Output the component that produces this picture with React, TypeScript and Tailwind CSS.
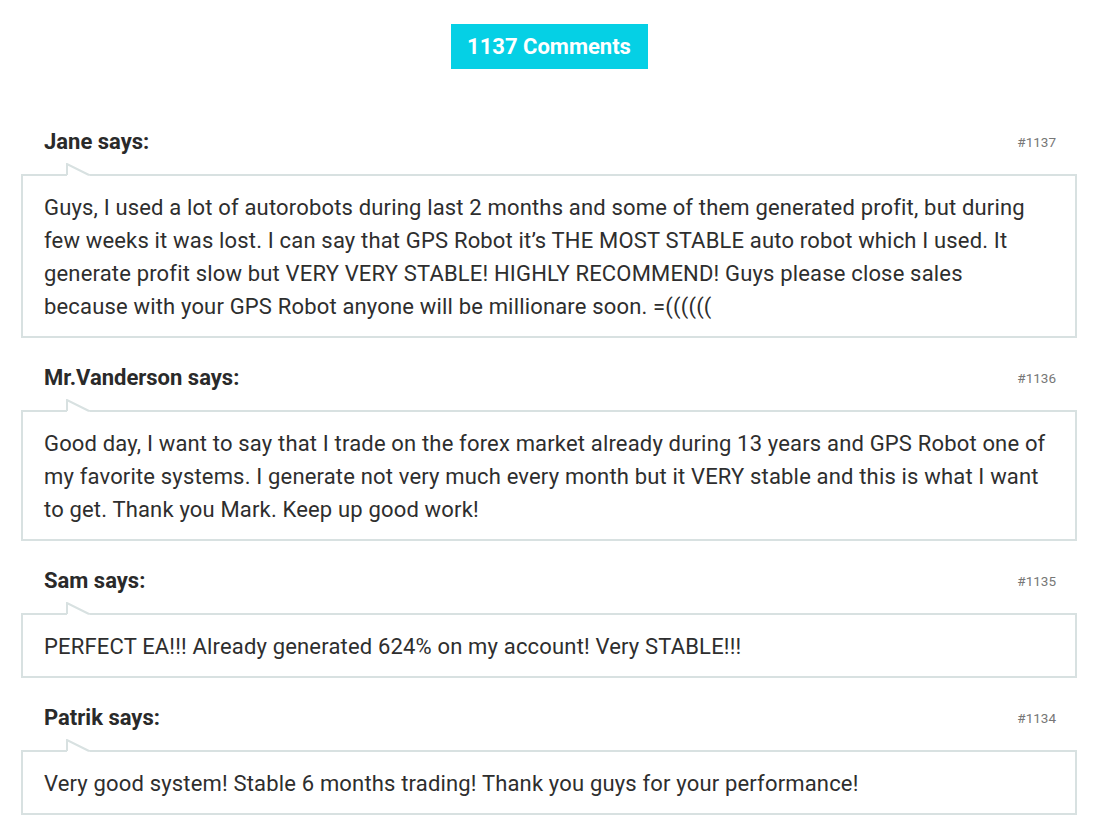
import React from "react";

type Comment = {
  id: number;
  author: string;
  text: string;
};

const comments: Comment[] = [
  {
    id: 1137,
    author: "Jane",
    text: "Guys, I used a lot of autorobots during last 2 months and some of them generated profit, but during few weeks it was lost. I can say that GPS Robot it’s THE MOST STABLE auto robot which I used. It generate profit slow but VERY VERY STABLE! HIGHLY RECOMMEND! Guys please close sales because with your GPS Robot anyone will be millionare soon. =((((((",
  },
  {
    id: 1136,
    author: "Mr.Vanderson",
    text: "Good day, I want to say that I trade on the forex market already during 13 years and GPS Robot one of my favorite systems. I generate not very much every month but it VERY stable and this is what I want to get. Thank you Mark. Keep up good work!",
  },
  {
    id: 1135,
    author: "Sam",
    text: "PERFECT EA!!! Already generated 624% on my account! Very STABLE!!!",
  },
  {
    id: 1134,
    author: "Patrik",
    text: "Very good system! Stable 6 months trading! Thank you guys for your performance!",
  },
];

function CommentItem({ comment }: { comment: Comment }) {
  return (
    <li className="mt-[28px] first:mt-0">
      <div className="flex items-center justify-between pl-[23px] pr-[21px] pb-[20px]">
        <span className="text-[22px] leading-[24px] font-bold text-[#2a2a2a]">
          {comment.author} says:
        </span>
        <span className="text-[13.5px] leading-[24px] text-[#777]">#{comment.id}</span>
      </div>
      <div className="relative border-2 border-[#d8e1e1] bg-white pl-[21px] pr-[27px] pt-[15px] pb-[13px]">
        <svg
          className="absolute left-[43px] top-[-13px]"
          width="25"
          height="13"
          viewBox="0 0 25 13"
          aria-hidden="true"
        >
          <path d="M1 13 L1 1 L24 13 Z" fill="#fff" />
          <path d="M1 12 L1 1 L23 12" fill="none" stroke="#d8e1e1" strokeWidth="2" />
        </svg>
        <p className="text-[22px] leading-[33px] tracking-[0.17px] text-[#2e2e2e]">{comment.text}</p>
      </div>
    </li>
  );
}

export default function App() {
  return (
    <div
      className="min-h-screen bg-white pl-[21px] pr-[20px] pt-[24px]"
      style={{ fontFamily: "Roboto, 'Liberation Sans', sans-serif" }}
    >
      <div className="flex justify-center">
        <div className="flex h-[45px] w-[197px] items-center justify-center bg-[#05d0e5] text-[22px] font-bold text-white">
          1137 Comments
        </div>
      </div>
      <ul className="mt-[61px]">
        {comments.map((comment) => (
          <CommentItem comment={comment} key={comment.id} />
        ))}
      </ul>
    </div>
  );
}
